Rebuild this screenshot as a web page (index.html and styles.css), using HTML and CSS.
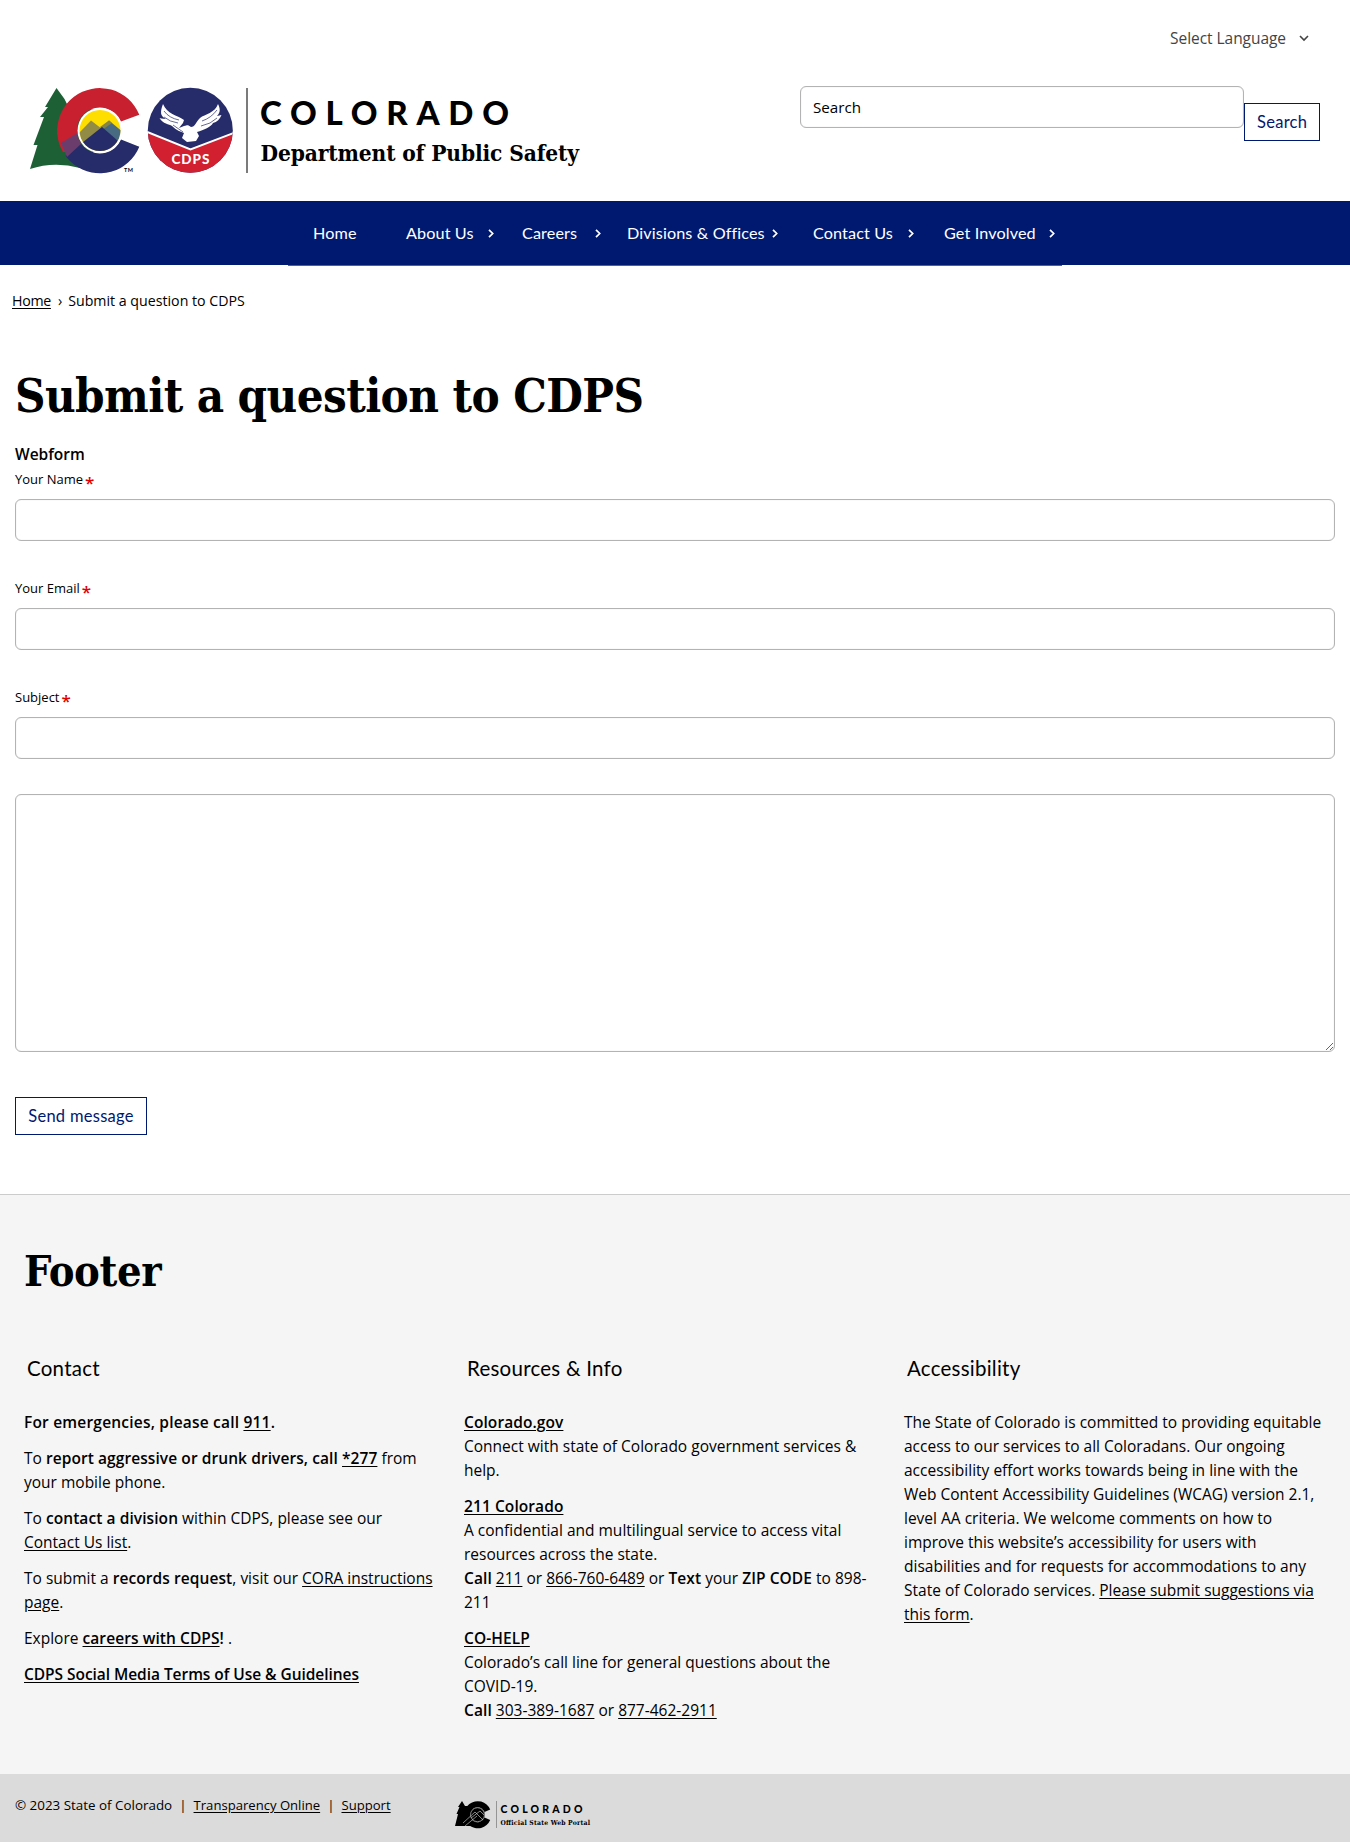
FILE: index.html
```
<!DOCTYPE html>
<html lang="en">
<head>
<meta charset="utf-8">
<title>Submit a question to CDPS</title>
<link rel="stylesheet" href="styles.css">
</head>
<body>
<header class="header">
  <svg class="brand" width="570" height="100" viewBox="20 80 570 100" role="img" aria-label="Colorado Department of Public Safety">
    <defs>
      <clipPath id="c-ring"><path d="M139.300 114.700A42.600 42.600 0 1 0 139.300 146.700L121 139.500A23 23 0 1 1 121 121.500Z"/></clipPath>
      <clipPath id="c-sun"><circle cx="100" cy="130.500" r="20.500"/></clipPath>
      <clipPath id="seal"><circle cx="190.300" cy="130.300" r="42.500"/></clipPath>
    </defs>
    <path fill="#1e6035" d="M56.500 88L45 107H48L40 117H44L33.500 145H37.500L30 169Q54 161 80 168L95 150V110L67 104L64.500 99Z"/>
    <g clip-path="url(#c-ring)">
      <rect x="55" y="85" width="90" height="50" fill="#c8202f"/>
      <rect x="55" y="128" width="33" height="24" fill="#c8202f"/>
      <path fill="#262b69" d="M64 157L80 144L100 130H145V176H62Z"/>
      <path fill="#6b3d6c" d="M61 143L79 132L83 142L67 157Z"/>
    </g>
    <circle cx="100" cy="130.500" r="22.500" fill="#fff"/>
    <g clip-path="url(#c-sun)">
      <rect x="78" y="108" width="45" height="45" fill="#fedd00"/>
      <path fill="#918b45" d="M76 136L91 120.500L102 129L88 148L76 150Z"/>
      <path fill="#496b82" d="M100 129L109 120.500L124 133V145Z"/>
      <path fill="#858443" d="M100 127L109 120.500L112 123L102 130Z"/>
      <path fill="#262b69" d="M78 146L102 127L124 146V155H78Z"/>
    </g>
    <g clip-path="url(#seal)">
      <rect x="147" y="87" width="87" height="87" fill="#262b69"/>
      <path fill="#d22030" d="M146 132L190.500 150L235 133V175H146Z"/>
      <path fill="none" stroke="#fff" stroke-width="2" d="M146 131.500L190.500 149.500L235 132.500"/>
    </g>
    <path fill="#fff" d="M163 104C160 112 160 116 166 119C162 119 160 118 159.500 118C163 124 169 124 172 126C176 130 181 132 184 133L182 138L187 142L196 141L199 136L197 132C204 130 211 127 213 123C217 122 220 119 221.500 115L217 116C221 112 220 108 218 104C215 113 205 114 200 118C196 122 195 127 191 127C188 125 188 125 184 126L179 128L183 123L184 120C177 115 167 114 163 104Z"/>
    <path fill="none" stroke="#262b69" stroke-width=".7" d="M164 111Q169 118 179 120M164 117Q170 122 178 123M217 110Q211 118 202 121M217 118Q211 124 201 126M173 125L183 132"/>
    <text class="seal-text" x="171.500" y="164.300" textLength="38" lengthAdjust="spacing">CDPS</text>
    <text class="tm" x="124" y="172" textLength="9">TM</text>
    <rect x="246.300" y="88" width="1.400" height="85" fill="#444"/>
    <text class="state" x="260" y="124.700" textLength="249" lengthAdjust="spacing">COLORADO</text>
    <text class="department" x="260.500" y="160.700" textLength="318.500">Department of Public Safety</text>
  </svg>
  <div class="tools">
    <div class="language">Select Language
      <svg width="10" height="7" viewBox="0 0 10 7"><path d="M1 1L5 5L9 1" fill="none" stroke="#444" stroke-width="1.600"/></svg>
    </div>
    <form class="search">
      <input class="field search-field" type="text" value="Search" aria-label="Search">
      <button class="button search-button" type="button">Search</button>
    </form>
  </div>
</header>

<nav class="nav">
  <ul class="menu">
    <li class="item home"><span>Home</span></li>
    <li class="item about"><span>About Us</span><svg class="arrow" viewBox="0 0 6 9"><path d="M1 .8L4.700 4.500L1 8.200"/></svg></li>
    <li class="item careers"><span>Careers</span><svg class="arrow" viewBox="0 0 6 9"><path d="M1 .8L4.700 4.500L1 8.200"/></svg></li>
    <li class="item divisions"><span>Divisions &amp; Offices</span><svg class="arrow" viewBox="0 0 6 9"><path d="M1 .8L4.700 4.500L1 8.200"/></svg></li>
    <li class="item contact"><span>Contact Us</span><svg class="arrow" viewBox="0 0 6 9"><path d="M1 .8L4.700 4.500L1 8.200"/></svg></li>
    <li class="item involved"><span>Get Involved</span><svg class="arrow" viewBox="0 0 6 9"><path d="M1 .8L4.700 4.500L1 8.200"/></svg></li>
  </ul>
</nav>

<main class="main">
  <div class="breadcrumb"><a href="#">Home</a><span class="crumb-mark">›</span><span>Submit a question to CDPS</span></div>
  <h1 class="title">Submit a question to CDPS</h1>
  <div class="form-name">Webform</div>
  <form class="webform">
    <div class="row"><label class="label" for="name">Your Name<b class="star">*</b></label><input class="field" id="name" type="text"></div>
    <div class="row"><label class="label" for="email">Your Email<b class="star">*</b></label><input class="field" id="email" type="text"></div>
    <div class="row"><label class="label" for="subject">Subject<b class="star">*</b></label><input class="field" id="subject" type="text"></div>
    <textarea class="field message" aria-label="Message"></textarea>
    <button class="button send" type="button">Send message</button>
  </form>
</main>

<footer class="footer">
  <h2 class="footer-title">Footer</h2>
  <div class="columns">
    <section class="column">
      <h3 class="column-title">Contact</h3>
      <p class="emergency"><b>For emergencies, please call <a href="#">911</a>.</b></p>
      <p>To <b>report aggressive or drunk drivers, call <a href="#">*277</a></b> from<br>your mobile phone.</p>
      <p>To <b>contact a division</b> within CDPS, please see our<br><a href="#">Contact Us list</a>.</p>
      <p>To submit a <b>records request</b>, visit our <a href="#">CORA instructions<br>page</a>.</p>
      <p>Explore <b><a href="#">careers with CDPS</a>!</b> .</p>
      <p class="terms"><b><a href="#">CDPS Social Media Terms of Use &amp; Guidelines</a></b></p>
    </section>
    <section class="column">
      <h3 class="column-title">Resources &amp; Info</h3>
      <p><b><a href="#">Colorado.gov</a></b><br>Connect with state of Colorado government services &amp;<br>help.</p>
      <p><b><a href="#">211 Colorado</a></b><br>A confidential and multilingual service to access vital<br>resources across the state.<br><b>Call</b> <a href="#">211</a> or <a href="#">866-760-6489</a> or <b>Text</b> your <b>ZIP CODE</b> to 898-<br>211</p>
      <p><b><a href="#">CO-HELP</a></b><br>Colorado’s call line for general questions about the<br>COVID-19.<br><b>Call</b> <a href="#">303-389-1687</a> or <a href="#">877-462-2911</a></p>
    </section>
    <section class="column">
      <h3 class="column-title">Accessibility</h3>
      <p>The State of Colorado is committed to providing equitable<br>access to our services to all Coloradans. Our ongoing<br>accessibility effort works towards being in line with the<br>Web Content Accessibility Guidelines (WCAG) version 2.1,<br>level AA criteria. We welcome comments on how to<br>improve this website’s accessibility for users with<br>disabilities and for requests for accommodations to any<br>State of Colorado services. <a href="#">Please submit suggestions via<br>this form</a>.</p>
    </section>
  </div>
</footer>

<div class="legal">
  <div class="legal-text"><span>© 2023 State of Colorado</span><span class="bar">|</span><a href="#">Transparency Online</a><span class="bar">|</span><a href="#">Support</a></div>
  <svg class="portal" width="140" height="32" viewBox="453 1798 140 32" role="img" aria-label="Colorado Official State Web Portal">
    <path d="M462 1801L458 1807H459.500L456.500 1814H458L455 1826H472V1806H465Z"/>
    <path d="M490.200 1809.500A13.600 13.600 0 1 0 490.200 1820L484.500 1817.500A7.500 7.500 0 1 1 484.500 1812Z"/>
    <circle cx="477.500" cy="1814.700" r="7.500"/>
    <circle class="fine" cx="477.500" cy="1814.700" r="7"/>
    <path class="fine" d="M463 1823L475 1812L483 1820M471 1818L480 1811L484 1815M465 1826L477 1816"/>
    <rect x="496" y="1801" width=".7" height="27" fill="#777"/>
    <text class="portal-state" x="500.500" y="1813" textLength="82" lengthAdjust="spacing">COLORADO</text>
    <text class="portal-name" x="500.500" y="1824.500" textLength="89.500">Official State Web Portal</text>
  </svg>
</div>
</body>
</html>
```
FILE: styles.css
```
* { box-sizing: border-box; }
body {
  margin: 0;
  width: 1350px;
  background: #fff;
  color: #000;
  font: 15.5px/24px "Open Sans", sans-serif;
}
a { color: inherit; text-underline-offset: 2px; }
b { font-weight: 600; font-size: 15.5px; letter-spacing: .08px; }
input, button, textarea { font: inherit; color: inherit; margin: 0; }
input, textarea { display: block; }

.header {
  display: flex;
  justify-content: space-between;
  height: 201px;
  padding: 0 30px 0 20px;
}
.brand { margin-top: 80px; }
.state { font: 900 33px Lato, sans-serif; }
.department { font: 700 22.500px "DejaVu Serif Condensed", "DejaVu Serif", serif; }
.seal-text { font: 900 13.500px Lato, sans-serif; fill: #fff; }
.tm { font: 700 5.500px Lato, sans-serif; }

.tools { width: 520px; padding-top: 26px; }
.language {
  display: flex;
  align-items: center;
  justify-content: flex-end;
  gap: 13px;
  padding-right: 11px;
  color: #444;
  letter-spacing: -.05px;
}
.search { display: flex; margin-top: 36px; }
.field {
  width: 100%;
  height: 42px;
  padding: 0 12px;
  border: 1px solid #b3b3b3;
  border-radius: 6px;
  background: #fff;
  box-shadow: inset 0 0 1px #ccc;
}
.search-field { width: 444px; font-size: 15.2px; }
.button {
  height: 38px;
  padding: 0 12px;
  border: 1px solid #001970;
  background: #fff;
  color: #001970;
  font: 16.500px/34px Lato, sans-serif;
  letter-spacing: .28px;
  white-space: nowrap;
}
.search-button { width: 76px; margin-top: 17px; }

.nav { height: 64px; background: #001970; }
.menu {
  display: flex;
  width: 774px;
  height: 65px;
  margin: 0 0 0 288px;
  padding: 0 0 0 25px;
  background: #001970;
  border-bottom: 1px solid #4d5e9b;
  list-style: none;
}
.item {
  display: flex;
  align-items: center;
  justify-content: space-between;
  flex: none;
  color: #fff;
  font: 16.200px/24px Lato, sans-serif;
  letter-spacing: .12px;
  white-space: nowrap;
}
.home { width: 45px; margin-right: 48px; }
.about { width: 88px; margin-right: 28px; }
.careers { width: 79px; margin-right: 26px; }
.divisions { width: 151px; margin-right: 35px; }
.contact { width: 101px; margin-right: 30px; }
.involved { width: 111px; }
.arrow { width: 6px; height: 9px; fill: none; stroke: #fff; stroke-width: 1.700; }

.main { height: 929px; padding: 24px 15px 0; }
.breadcrumb {
  display: flex;
  margin-left: -3px;
  font-size: 14.200px;
}
.breadcrumb a { letter-spacing: -.3px; }
.crumb-mark { margin: 0 6px 0 7px; }
.title {
  margin: 47px 0 0;
  font: 700 47px/72px "DejaVu Serif Condensed", "DejaVu Serif", serif;
  letter-spacing: -.6px;
}
.form-name { margin-top: 10px; font-weight: 600; font-size: 15.500px; }
.label {
  display: flex;
  height: 22px;
  font-size: 13px;
  line-height: 24px;
}
.star { margin-left: 2px; color: #e00000; font-size: 17px; line-height: 32px; }
.row { height: 109px; padding-top: 1px; }
.row .field { margin-top: 10px; }
.message { height: 258px; margin-top: 1px; resize: vertical; }
.send { display: block; width: 132px; margin-top: 45px; }

.footer {
  height: 580px;
  padding: 50px 24px 0;
  border-top: 1px solid #ccc;
  background: #f5f5f5;
}
.footer-title {
  margin: 0;
  font: 700 43px/52px "DejaVu Serif Condensed", "DejaVu Serif", serif;
  letter-spacing: -.4px;
}
.columns { display: grid; grid-template-columns: repeat(3, 440px); margin-top: 55px; white-space: nowrap; }
.column-title { margin: 0 0 26px 3px; font: 20.500px/32px Lato, sans-serif; letter-spacing: .24px; }
.column p { margin: 0 0 12px; }
.emergency b { letter-spacing: .2px; }
.terms b { letter-spacing: -.05px; }

.legal {
  display: flex;
  height: 68px;
  padding: 0 15px;
  background: #dbdbdb;
}
.legal-text { display: flex; width: 438px; padding-top: 19px; font-size: 13.400px; white-space: nowrap; }
.legal-text a { font-size: 13.100px; }
.bar { margin: 0 7px; }
.portal { margin-top: 24px; }
.portal-state { font: 900 10.500px Lato, sans-serif; }
.portal-name { font: 700 6.800px "DejaVu Serif Condensed", "DejaVu Serif", serif; }
.fine { fill: none; stroke: #dbdbdb; stroke-width: .6; }
```
